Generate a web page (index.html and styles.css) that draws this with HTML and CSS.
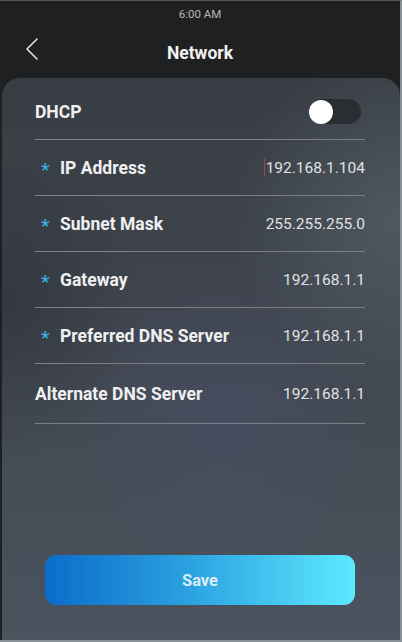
FILE: index.html
```html
<!DOCTYPE html>
<html>
<head>
<meta charset="utf-8">
<link rel="stylesheet" href="styles.css">
</head>
<body>
<div class="screen">
  <header class="header">
    <div class="status">6:00 AM</div>
    <div class="nav">
      <svg class="back" width="14" height="22" viewBox="0 0 14 22"><path d="M12 1 L2 11 L12 21" fill="none" stroke="#e8e8e8" stroke-width="1.5" stroke-linecap="round" stroke-linejoin="round"/></svg>
      <div class="title">Network</div>
    </div>
  </header>
  <main class="card">
    <div class="row">
      <span class="label">DHCP</span>
      <span class="toggle"><span class="knob"></span></span>
    </div>
    <div class="row">
      <span class="label"><span class="req">*</span>IP Address</span>
      <span class="value"><span class="cursor"></span>192.168.1.104</span>
    </div>
    <div class="row">
      <span class="label"><span class="req">*</span>Subnet Mask</span>
      <span class="value">255.255.255.0</span>
    </div>
    <div class="row">
      <span class="label"><span class="req">*</span>Gateway</span>
      <span class="value">192.168.1.1</span>
    </div>
    <div class="row">
      <span class="label"><span class="req">*</span>Preferred DNS Server</span>
      <span class="value">192.168.1.1</span>
    </div>
    <div class="row row-last">
      <span class="label">Alternate DNS Server</span>
      <span class="value">192.168.1.1</span>
    </div>
    <button class="save">Save</button>
  </main>
</div>
</body>
</html>
```
FILE: styles.css
```css
html, body { margin: 0; padding: 0; background: #1f2022; }
.screen {
  width: 402px; height: 642px; box-sizing: border-box;
  border-top: 1px solid #55595d;
  border-right: 2px solid #8a9196;
  border-bottom: 2px solid #8a9196;
  background: #1f2022;
  display: flex; flex-direction: column;
  font-family: Roboto, "Liberation Sans", sans-serif;
  overflow: hidden;
}
.header { height: 77px; flex: none; display: flex; flex-direction: column; }
.status { height: 27px; line-height: 27px; text-align: center; font-size: 11.5px; color: #b8b8b8; }
.nav { position: relative; height: 50px; display: flex; align-items: center; justify-content: center; }
.back { position: absolute; left: 25px; top: 10px; }
.title { font-size: 17.5px; font-weight: 700; color: #f2f2f2; margin-top: 0; }
.card {
  flex: 1; margin-left: 2px; border-radius: 18px 18px 0 0;
  padding: 6px 35px 0 33px;
  background:
    radial-gradient(ellipse 60% 45% at 100% 25%, rgba(100,115,125,0.45), transparent 70%),
    radial-gradient(ellipse 55% 40% at 55% 60%, rgba(75,80,115,0.35), transparent 70%),
    radial-gradient(ellipse 50% 40% at 0% 40%, rgba(30,33,38,0.35), transparent 70%),
    linear-gradient(180deg, #383d43 0%, #40464f 45%, #4a545e 100%);
  display: flex; flex-direction: column;
}
.row {
  height: 55px; border-bottom: 1px solid #7b8086;
  display: flex; align-items: center; justify-content: space-between;
}
.row-last { height: 59px; }
.label { font-size: 17.5px; font-weight: 700; color: #f0f0f0; display: flex; align-items: center; }
.req { color: #3aaee6; font-size: 19px; font-weight: 500; width: 25px; padding-left: 6px; box-sizing: border-box; margin-top: 3px; }
.value { font-size: 15.5px; color: #e2e2e2; display: flex; align-items: center; }
.cursor { width: 1px; height: 19px; background: #a04545; margin-right: 1px; }
.toggle {
  width: 52px; height: 25px; border-radius: 13px; background: #2a2e33;
  display: flex; align-items: center; margin-right: 4px;
}
.knob { width: 24px; height: 24px; border-radius: 50%; background: #ffffff; }
.save {
  margin: 131px 10px 0 10px; height: 50px; border: none; border-radius: 11px;
  background: linear-gradient(90deg, #0b6ccb 0%, #2aa0e0 45%, #5de9ff 100%);
  color: #dcedf5; font-family: Roboto, "Liberation Sans", sans-serif;
  font-size: 16.5px; font-weight: 700;
}
```
